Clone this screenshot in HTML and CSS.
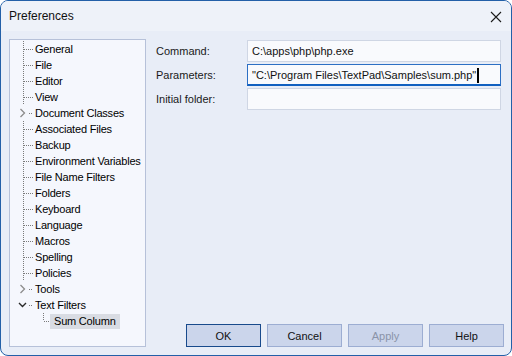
FILE: index.html
```html
<!DOCTYPE html>
<html lang="en">
<head>
  <meta charset="UTF-8" />
  <title>Preferences</title>
  <link rel="stylesheet" href="styles.css">
</head>
<body>
  <div class="window">
    <div class="titlebar">
      <span class="title">Preferences</span>
      <svg class="close" width="12" height="12" viewBox="0 0 12 12">
        <path d="M1 1 L11 11 M11 1 L1 11" stroke="#1b1b1b" stroke-width="1.1" fill="none"/>
      </svg>
    </div>

    <div class="content">
      <ul class="tree">
        <li class="node"><span class="branch"></span><span class="label">General</span></li>
        <li class="node"><span class="branch"></span><span class="label">File</span></li>
        <li class="node"><span class="branch"></span><span class="label">Editor</span></li>
        <li class="node"><span class="branch"></span><span class="label">View</span></li>
        <li class="node">
          <svg class="expander" width="16" height="16" viewBox="0 0 16 16">
            <path d="M2.5 4 L6.5 8 L2.5 12" stroke="#8c8c8c" stroke-width="1.3" fill="none"/>
            <path d="M11 8.5 H15" stroke="#7a7a7a" stroke-dasharray="1 1"/>
          </svg><span class="label">Document Classes</span>
        </li>
        <li class="node"><span class="branch"></span><span class="label">Associated Files</span></li>
        <li class="node"><span class="branch"></span><span class="label">Backup</span></li>
        <li class="node"><span class="branch"></span><span class="label">Environment Variables</span></li>
        <li class="node"><span class="branch"></span><span class="label">File Name Filters</span></li>
        <li class="node"><span class="branch"></span><span class="label">Folders</span></li>
        <li class="node"><span class="branch"></span><span class="label">Keyboard</span></li>
        <li class="node"><span class="branch"></span><span class="label">Language</span></li>
        <li class="node"><span class="branch"></span><span class="label">Macros</span></li>
        <li class="node"><span class="branch"></span><span class="label">Spelling</span></li>
        <li class="node"><span class="branch"></span><span class="label">Policies</span></li>
        <li class="node">
          <svg class="expander" width="16" height="16" viewBox="0 0 16 16">
            <path d="M2.5 4 L6.5 8 L2.5 12" stroke="#8c8c8c" stroke-width="1.3" fill="none"/>
            <path d="M11 8.5 H15" stroke="#7a7a7a" stroke-dasharray="1 1"/>
          </svg><span class="label">Tools</span>
        </li>
        <li class="node">
          <svg class="expander" width="16" height="16" viewBox="0 0 16 16">
            <path d="M1 6 L4.5 9.5 L8 6" stroke="#2a2a2a" stroke-width="1.4" fill="none"/>
            <path d="M11 8.5 H15" stroke="#7a7a7a" stroke-dasharray="1 1"/>
          </svg><span class="label">Text Filters</span>
        </li>
        <li class="node child"><span class="branch last"></span><span class="label selected">Sum Column</span></li>
      </ul>

      <div class="panel">
        <div class="fields">
          <span class="field-label">Command:</span>
          <div class="field">C:\apps\php\php.exe</div>

          <span class="field-label">Parameters:</span>
          <div class="field focused">"C:\Program Files\TextPad\Samples\sum.php"<span class="caret"></span></div>

          <span class="field-label">Initial folder:</span>
          <div class="field"></div>
        </div>

        <div class="buttons">
          <button class="btn default">OK</button>
          <button class="btn">Cancel</button>
          <button class="btn" disabled>Apply</button>
          <button class="btn">Help</button>
        </div>
      </div>
    </div>
  </div>
</body>
</html>
```

FILE: styles.css
```css
body {
  margin: 0;
  padding: 0;
  font-family: "Liberation Sans", Arial, sans-serif;
  font-size: 11px;
  color: #000;
}
.window {
  width: 512px;
  height: 356px;
  box-sizing: border-box;
  border: 1px solid #2360a8;
  border-radius: 8px;
  background: #e8edf7;
  display: flex;
  flex-direction: column;
  overflow: hidden;
}
.titlebar {
  height: 30px;
  flex: none;
  background: #eef2f9;
  display: flex;
  align-items: center;
  justify-content: space-between;
  padding: 0 9px 0 8px;
}
.title {
  font-size: 12px;
  color: #111;
}
.close {
  display: block;
  margin-top: 1px;
}
.content {
  flex: 1;
  display: flex;
  gap: 10px;
  padding: 8px 7px 8px 8px;
}

/* tree */
.tree {
  width: 137px;
  box-sizing: border-box;
  margin: 0;
  padding: 1px 0 0 13px;
  list-style: none;
  background: #f5f7fd;
  border: 1px solid #b6c1d9;
}
.node {
  height: 16px;
  display: flex;
  align-items: center;
}
.branch {
  width: 11px;
  height: 16px;
  flex: none;
  background:
    repeating-linear-gradient(to bottom, #7a7a7a 0 1px, transparent 1px 2px) 0 0 / 1px 100% no-repeat,
    repeating-linear-gradient(to right, #7a7a7a 0 1px, transparent 1px 2px) 1px 8px / 9px 1px no-repeat;
}
.expander {
  display: block;
  flex: none;
  margin-left: -5px;
}
.label {
  white-space: nowrap;
  letter-spacing: -0.2px;
  padding-left: 1px;
}
.child {
  padding-left: 20px;
}
.branch.last {
  width: 7px;
  background:
    repeating-linear-gradient(to bottom, #7a7a7a 0 1px, transparent 1px 2px) 0 0 / 1px 8px no-repeat,
    repeating-linear-gradient(to right, #7a7a7a 0 1px, transparent 1px 2px) 1px 8px / 6px 1px no-repeat;
}
.label.selected {
  background: #d9dce3;
  padding: 1px 4px 2px 4px;
}

/* right panel */
.panel {
  flex: 1;
  display: flex;
  flex-direction: column;
  justify-content: space-between;
}
.fields {
  display: grid;
  grid-template-columns: 91px 254px;
  row-gap: 2px;
  align-items: center;
  margin-top: 1px;
}
.field-label {
  color: #1a1a1a;
}
.field {
  height: 22px;
  box-sizing: border-box;
  background: #f9fafd;
  border: 1px solid #cfd6e4;
  padding: 0 4px;
  display: flex;
  align-items: center;
  color: #111;
  white-space: nowrap;
}
.field.focused {
  border-color: #2c6fc4;
  border-bottom: 2px solid #1160c0;
  padding-top: 1px;
}
.caret {
  width: 2px;
  height: 15px;
  background: #000;
  margin-left: 1px;
}
.buttons {
  display: flex;
  justify-content: flex-end;
  gap: 6px;
}
.btn {
  width: 75px;
  height: 23px;
  box-sizing: border-box;
  font-family: inherit;
  font-size: 11px;
  color: #111;
  background: #cbd5eb;
  border: 1px solid #9cadd2;
  border-radius: 0;
  padding: 0;
}
.btn.default {
  border-color: #184a8c;
}
.btn:disabled {
  color: #8a93a8;
}
```
